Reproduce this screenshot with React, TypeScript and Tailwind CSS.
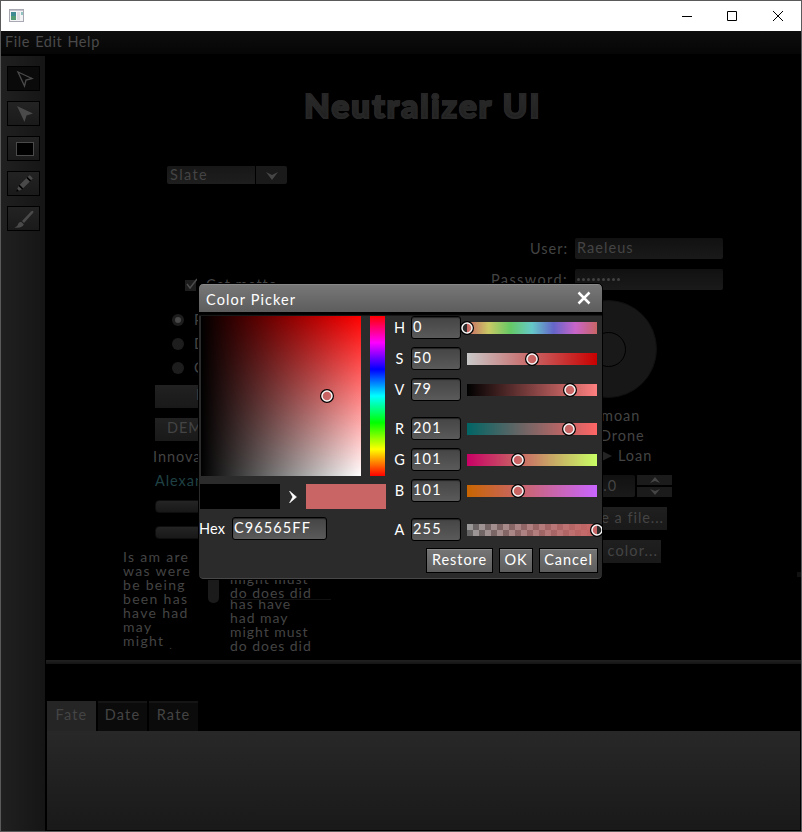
import React from 'react';

const DIM = 'text-[#444444]';

function ToolButton({ children, active = false }: { children: React.ReactNode; active?: boolean }) {
  return (
    <div
      className={`flex h-[25px] w-[33px] items-center justify-center border border-black ${
        active ? 'bg-[#0a0a0a]' : 'bg-linear-to-b from-[#232323] to-[#1a1a1a]'
      }`}
    >
      {children}
    </div>
  );
}

function Toolbar() {
  return (
    <div className="flex w-[44px] shrink-0 flex-col gap-[10px] bg-linear-to-r from-[#202020] to-[#151515] pt-[10px] pl-[6px]">
      <ToolButton active>
        <svg className="ml-[3px]" width="18" height="18" viewBox="0 0 18 18">
          <path d="M2 2 L16 8.5 L10 10 L8.5 16 Z" fill="none" stroke="#4a4a4a" strokeWidth="1.3" />
        </svg>
      </ToolButton>
      <ToolButton>
        <svg className="ml-[3px]" width="18" height="18" viewBox="0 0 18 18">
          <path d="M1 1 L17 8.5 L10.5 10.5 L8.5 17 Z" fill="#4a4a4a" />
        </svg>
      </ToolButton>
      <ToolButton>
        <div className="mt-px ml-[2px] h-[14px] w-[18px] border border-[#4a4a4a] bg-black" />
      </ToolButton>
      <ToolButton>
        <svg width="18" height="18" viewBox="0 0 18 18">
          <g transform="rotate(45 9 9)">
            <path d="M9 20 L7.6 17 H10.4 Z" fill="#000" />
            <path d="M6.6 14.2 H11.4 L10.2 17.4 H7.8 Z" fill="#4a4a4a" />
            <rect x="6.6" y="12.6" width="4.8" height="1.6" fill="#000" />
            <rect x="6.6" y="3" width="4.8" height="9.6" fill="#4a4a4a" />
            <rect x="6.6" y="1.4" width="4.8" height="1.6" fill="#000" />
            <rect x="6.6" y="-1.4" width="4.8" height="2.8" rx="1" fill="#4a4a4a" />
          </g>
        </svg>
      </ToolButton>
      <ToolButton>
        <svg width="20" height="20" viewBox="0 0 20 20">
          <path d="M8 12 L17 2.5 Q19 1 19.5 3 L19 4 L10 14 Z" fill="#4a4a4a" />
          <path d="M7 12.8 L9.8 15.2 Q8.5 19.5 0.5 18.5 Q4 17 4 15 Q5 13 7 12.8 Z" fill="#4a4a4a" />
        </svg>
      </ToolButton>
    </div>
  );
}

function TitleBar() {
  return (
    <div className="flex h-[30px] shrink-0 items-center bg-white pl-2">
      <svg width="16" height="14" viewBox="0 0 16 14">
        <rect x="0.5" y="0.5" width="14" height="12" fill="#f4f4f6" stroke="#a9a9b4" />
        <path d="M1 1.5H14" stroke="#c4c4ce" />
        <rect x="2" y="3" width="5" height="8" fill="#3f8b93" />
        <rect x="2" y="7" width="5" height="4" fill="#529b75" />
        <rect x="8" y="3" width="3" height="8" fill="#dcdce2" />
        <rect x="12" y="3" width="2" height="3" fill="#91c4c0" />
      </svg>
      <div className="ml-auto flex items-center pr-[18px]">
        <svg width="10" height="10" viewBox="0 0 10 10"><path d="M0 5.5H10" stroke="#000" /></svg>
        <svg className="ml-[35px]" width="10" height="10" viewBox="0 0 10 10"><path d="M.5 .5H9.5V9.5H.5Z" stroke="#000" fill="none" /></svg>
        <svg className="ml-[36px]" width="10" height="10" viewBox="0 0 10 10"><path d="M0 0L10 10M10 0L0 10" stroke="#000" /></svg>
      </div>
    </div>
  );
}

function Radio({ label, on = false }: { label: string; on?: boolean }) {
  return (
    <div className="flex h-[24px] items-center">
      <div className="flex size-[12px] items-center justify-center rounded-full bg-[#1d1d1d]">
        {on && <div className="size-[6px] rounded-full bg-[#484848]" />}
      </div>
      <span className="ml-[10px]">{label}</span>
    </div>
  );
}

function LeftColumn() {
  return (
    <div className="flex w-[315px] shrink-0 flex-col">
      <div className="ml-[140px] flex h-[14px] items-center">
        <svg width="12" height="14" viewBox="0 0 12 14">
          <rect y="2" width="11" height="11" fill="#1d1d1d" />
          <path d="M2 6 L5 10 L12 1" fill="none" stroke="#4c4c4c" strokeWidth="1.4" />
        </svg>
        <span className="ml-[9px]">Cat matte</span>
      </div>
      <div className="mt-[16px] ml-[127px] flex flex-col">
        <Radio label="Pat" on />
        <Radio label="Dog" />
        <Radio label="Cat" />
      </div>
      <div className="mt-[5px] ml-[110px] flex h-[23px] w-[100px] items-center bg-linear-to-b from-[#212121] to-[#191919] pb-[3px] pl-[41px]">M</div>
      <div className="mt-[10px] ml-[110px] flex h-[23px] w-[100px] items-center bg-linear-to-b from-[#212121] to-[#191919] pb-[3px] pl-[12px]">DEMO</div>
      <div className="mt-[7px] ml-[108px] flex h-[18px] items-center">Innovate</div>
      <div className="mt-[6px] ml-[110px] flex h-[18px] items-center text-[#1f4143]">Alexander</div>
      <div className="mt-[10px] ml-[110px] h-[13px] w-[100px] rounded-[4px] border border-[#0e0e0e] bg-linear-to-b from-[#242424] to-[#181818]" />
      <div className="mt-[13px] ml-[110px] h-[13px] w-[100px] rounded-[4px] border border-[#0e0e0e] bg-linear-to-b from-[#242424] to-[#181818]" />
      <div className="mt-[11px] ml-[78px] flex text-[14px] leading-[14px]">
        <div className="h-[100px] w-[85px] shrink-0 whitespace-pre-line tracking-[1.3px]">
          {'Is am are\nwas were\nbe being\nbeen has\nhave had\nmay\nmight'}
          <span className="relative top-[3px] ml-[5px] text-[9px]">.</span>
        </div>
        <div className="h-[53px] w-[11px] rounded-b-[5px] bg-[#1b1b1b]" />
        <div className="ml-[11px] flex w-[101px] flex-col tracking-[0.95px]">
          <div className="flex h-[50px] flex-col justify-end overflow-hidden border-b border-[#111111] whitespace-pre-line">
            <div className="-mb-px">{'might must\ndo does did'}</div>
          </div>
          <div className="flex h-[53px] flex-col justify-end overflow-hidden whitespace-pre-line">
            {'has have\nhad may\nmight must\ndo does did'}
          </div>
        </div>
      </div>
    </div>
  );
}

function RightColumn() {
  return (
    <div className="flex w-[363px] flex-col">
      <div className="flex h-[21px] items-center">
        <span className="w-[130px] text-right">User:</span>
        <div className="ml-[7px] flex h-[21px] w-[148px] items-center rounded-[2px] bg-linear-to-b from-[#111] to-[#1a1a1a] pb-px pl-[2px] tracking-[1.05px]">Raeleus</div>
      </div>
      <div className="mt-[10px] flex h-[21px] items-center">
        <span className="w-[130px] text-right tracking-[1.4px]">Password:</span>
        <div className="ml-[7px] flex h-[21px] w-[148px] items-center gap-[2px] rounded-[2px] bg-linear-to-b from-[#111] to-[#1a1a1a] pl-[2px]">
          {Array.from({ length: 9 }, (_, i) => (
            <i key={i} className="size-[3px] rounded-full bg-[#424242]" />
          ))}
        </div>
      </div>
      <div className="mt-[10px] ml-[121px] flex size-[98px] items-center justify-center rounded-full border border-[#101010] bg-[#171717]">
        <div className="size-[35px] rounded-full border border-black bg-[#191919]" />
      </div>
      <div className="mt-[8px] ml-[163px] flex h-[20px] items-center">moan</div>
      <div className="ml-[162px] flex h-[20px] items-center">Drone</div>
      <div className="ml-[160px] flex h-[20px] items-center">
        <svg width="14" height="14" viewBox="0 0 14 14"><path d="M0 0L14 7L0 14Z" fill="#242424" /></svg>
        <span className="ml-[6px]">Loan</span>
      </div>
      <div className="mt-[9px] ml-[137px] flex h-[22px]">
        <div className="flex w-[60px] items-center justify-end rounded-[2px] bg-linear-to-b from-[#111] to-[#1a1a1a] pr-[18px]">1.0</div>
        <div className="ml-[2px] flex flex-col gap-[2px]">
          <div className="flex h-[10px] w-[35px] items-center justify-center bg-[#1b1b1b]">
            <svg width="10" height="6" viewBox="0 0 10 6"><path d="M0 6L5 0L10 6L5 4Z" fill="#454545" /></svg>
          </div>
          <div className="flex h-[10px] w-[35px] items-center justify-center bg-[#1b1b1b]">
            <svg width="10" height="6" viewBox="0 0 10 6"><path d="M0 0L5 6L10 0L5 2Z" fill="#454545" /></svg>
          </div>
        </div>
      </div>
      <div className="mt-[10px] ml-[109px] flex h-[23px] w-[120px] items-center justify-end bg-linear-to-b from-[#1f1f1f] to-[#191919] pr-[3px] pb-[2px]">Choose a file...</div>
      <div className="mt-[10px] ml-[115px] flex h-[23px] w-[108px] items-center justify-end bg-linear-to-b from-[#1f1f1f] to-[#191919] pr-[3px] pb-[2px] tracking-[1.1px]">Pick color...</div>
      <div className="mt-[9px] h-[5px] w-[4px] self-end bg-[#111]" />
    </div>
  );
}

function Ring() {
  return (
    <svg width="14" height="14" viewBox="0 0 14 14">
      <circle cx="7" cy="7" r="6.2" fill="none" stroke="#000" strokeWidth="1.6" />
      <circle cx="7" cy="7" r="5" fill="none" stroke="#f4f4f4" strokeWidth="1.5" />
    </svg>
  );
}

const FIELD =
  'flex h-[23px] shrink-0 items-center rounded-[3px] border border-black bg-linear-to-b from-[#454545] to-[#5a5a5a] pl-[1px] pb-px shadow-[inset_0_1px_1px_#222]';

type Channel = { name: string; value: string; pos: number; track: string };

const HSV: Channel[] = [
  { name: 'H', value: '0', pos: 0, track: 'bg-[linear-gradient(to_right,#c96565,#c9c965,#65c965,#65c9c9,#6565c9,#c965c9,#c96565)]' },
  { name: 'S', value: '50', pos: 65, track: 'bg-[linear-gradient(to_right,#c9c9c9,#c90000)]' },
  { name: 'V', value: '79', pos: 103, track: 'bg-[linear-gradient(to_right,#000,#ff8080)]' },
];
const RGB: Channel[] = [
  { name: 'R', value: '201', pos: 102, track: 'bg-[linear-gradient(to_right,#006565,#ff6565)]' },
  { name: 'G', value: '101', pos: 51, track: 'bg-[linear-gradient(to_right,#c90065,#c9ff65)]' },
  { name: 'B', value: '101', pos: 51, track: 'bg-[linear-gradient(to_right,#c96500,#c965ff)]' },
];
const ALPHA: Channel[] = [
  {
    name: 'A',
    value: '255',
    pos: 130,
    track:
      'bg-[linear-gradient(to_right,#c9656500,#c96565),repeating-conic-gradient(#666_0_25%,#999_0_50%)] bg-size-[100%_100%,12px_12px]',
  },
];

function ChannelGroup({ items }: { items: Channel[] }) {
  return (
    <div className="flex flex-col gap-[8px]">
      {items.map((c) => (
        <div key={c.name} className="flex h-[23px] items-center">
          <span className="w-[18px] text-center">{c.name}</span>
          <div className={`${FIELD} ml-[2px] w-[50px] tracking-[1.2px]`}>{c.value}</div>
          <div className={`relative ml-[6px] h-[12px] w-[130px] ${c.track}`}>
            <div className="absolute -top-px -translate-x-1/2" style={{ left: c.pos }}>
              <Ring />
            </div>
          </div>
        </div>
      ))}
    </div>
  );
}

function DialogButton({ label, width }: { label: string; width: string }) {
  return (
    <div className={`flex h-[25px] items-center justify-center border border-black bg-linear-to-b from-[#757575] to-[#5d5d5d] pb-[2px] shadow-[inset_0_1px_0_#858585] ${width}`}>
      {label}
    </div>
  );
}

function ColorPicker() {
  return (
    <div className="absolute top-[284px] left-[199px] flex h-[295px] w-[403px] flex-col overflow-hidden rounded-[4px] border-b border-[#484848] bg-[#2b2b2b] text-[14.5px] whitespace-nowrap text-white outline-1 outline-black">
      <div className="flex h-[28px] shrink-0 items-center justify-between bg-linear-to-b from-[#787878] to-[#5d5d5d] pr-[11px] pl-[7px] shadow-[inset_0_1px_0_#888]">
        <span className="pt-[3px] tracking-[1.1px]">Color Picker</span>
        <svg width="14" height="14" viewBox="0 0 14 14">
          <path d="M1.5 1.5L12.5 12.5M12.5 1.5L1.5 12.5" stroke="#fff" strokeWidth="2.5" />
        </svg>
      </div>
      <div className="h-[4px] shrink-0 bg-linear-to-b from-black from-40% to-[#242424]" />
      <div className="flex">
        <div className="flex w-[192px] shrink-0 flex-col">
          <div className="ml-[2px] flex gap-[9px]">
            <div className="relative size-[160px] bg-[linear-gradient(to_right,#000,#0000),linear-gradient(to_bottom,#f00,#fff)]">
              <div className="absolute top-[73px] left-[119px]"><Ring /></div>
            </div>
            <div className="h-[160px] w-[15px] bg-[linear-gradient(to_bottom,#f00,#f0f,#00f,#0ff,#0f0,#ff0,#f00)]" />
          </div>
          <div className="mt-[8px] ml-px flex h-[25px] items-center">
            <div className="h-[25px] w-[80px] bg-black" />
            <svg className="ml-[9px]" width="8" height="12" viewBox="0 0 8 12">
              <path d="M0.5 0L7.5 6L0.5 12L3.8 6Z" fill="#fff" stroke="#fff" strokeWidth="0.6" />
            </svg>
            <div className="ml-[9px] h-[25px] w-[80px] bg-[#c96565]" />
          </div>
          <div className="mt-[8px] flex h-[23px] items-center">
            <span className="w-[33px] tracking-[0.2px]">Hex</span>
            <div className={`${FIELD} w-[95px] tracking-[1.1px]`}>C96565FF</div>
          </div>
        </div>
        <div className="flex flex-col">
          <div className="flex flex-col gap-[16px]">
            <ChannelGroup items={HSV} />
            <ChannelGroup items={RGB} />
            <ChannelGroup items={ALPHA} />
          </div>
          <div className="mt-[7px] ml-[35px] flex gap-[6px]">
            <DialogButton label="Restore" width="w-[67px]" />
            <DialogButton label="OK" width="w-[34px]" />
            <DialogButton label="Cancel" width="w-[59px]" />
          </div>
        </div>
      </div>
    </div>
  );
}

export default function App() {
  return (
    <div className={`relative flex h-[832px] w-[802px] flex-col overflow-hidden border border-[#5a5a5a] bg-black font-[Lato,sans-serif] text-[14.5px] leading-[18px] tracking-[0.95px] whitespace-nowrap ${DIM}`}>
      <TitleBar />
      <div className="flex h-[25px] shrink-0 items-center gap-[5px] border-b-2 border-black bg-linear-to-b from-[#0e0e0e] to-[#060606] pb-px pl-[4px] tracking-[0.6px] text-[#4a4a4a]">
        <span>File</span>
        <span>Edit</span>
        <span>Help</span>
      </div>
      <div className="flex min-h-0 flex-1">
        <Toolbar />
        <div className="flex min-w-0 flex-1 flex-col">
          <div className="flex h-[604px] shrink-0 flex-col">
            <h1 className="mt-[28px] bg-linear-to-b from-[#303030] to-[#1c1c1c] bg-clip-text text-center text-[33px] leading-[42px] font-black tracking-[2.2px] text-transparent [-webkit-text-stroke:2px_#262626]">
              Neutralizer UI
            </h1>
            <div className="mt-[40px] ml-[122px] flex h-[18px] gap-px">
              <div className="flex w-[88px] items-center rounded-l-[2px] bg-linear-to-b from-[#171717] to-[#1e1e1e] pb-px pl-[3px] tracking-[1.4px]">Slate</div>
              <div className="flex w-[31px] items-center justify-center rounded-r-[2px] bg-[#1a1a1a]">
                <svg className="mt-[2px]" width="12" height="8" viewBox="0 0 12 8"><path d="M0 0L6 3L12 0L6 8Z" fill="#464646" /></svg>
              </div>
            </div>
            <div className="mt-[54px] flex">
              <div className="flex w-[393px] shrink-0 flex-col pt-[40px]"><LeftColumn /></div>
              <RightColumn />
            </div>
          </div>
          <div className="ml-px h-[4px] shrink-0 bg-linear-to-b from-[#222] to-[#141414]" />
          <div className="mt-[37px] ml-[2px] flex gap-[2px] tracking-[1.2px]">
            <div className="flex h-[30px] w-[49px] items-center justify-center bg-[#252525] pb-[3px]">Fate</div>
            <div className="flex h-[30px] w-[49px] items-center justify-center border-t-2 border-[#151515] bg-[#0b0b0b] pb-[4px]">Date</div>
            <div className="flex h-[30px] w-[49px] items-center justify-center border-t-2 border-[#151515] bg-[#0b0b0b] pb-[4px]">Rate</div>
          </div>
          <div className="mr-px mb-px ml-[2px] flex-1 bg-linear-to-b from-[#282828] to-[#191919]" />
        </div>
      </div>
      <div className="absolute -top-px -left-px">
        <ColorPicker />
      </div>
    </div>
  );
}
